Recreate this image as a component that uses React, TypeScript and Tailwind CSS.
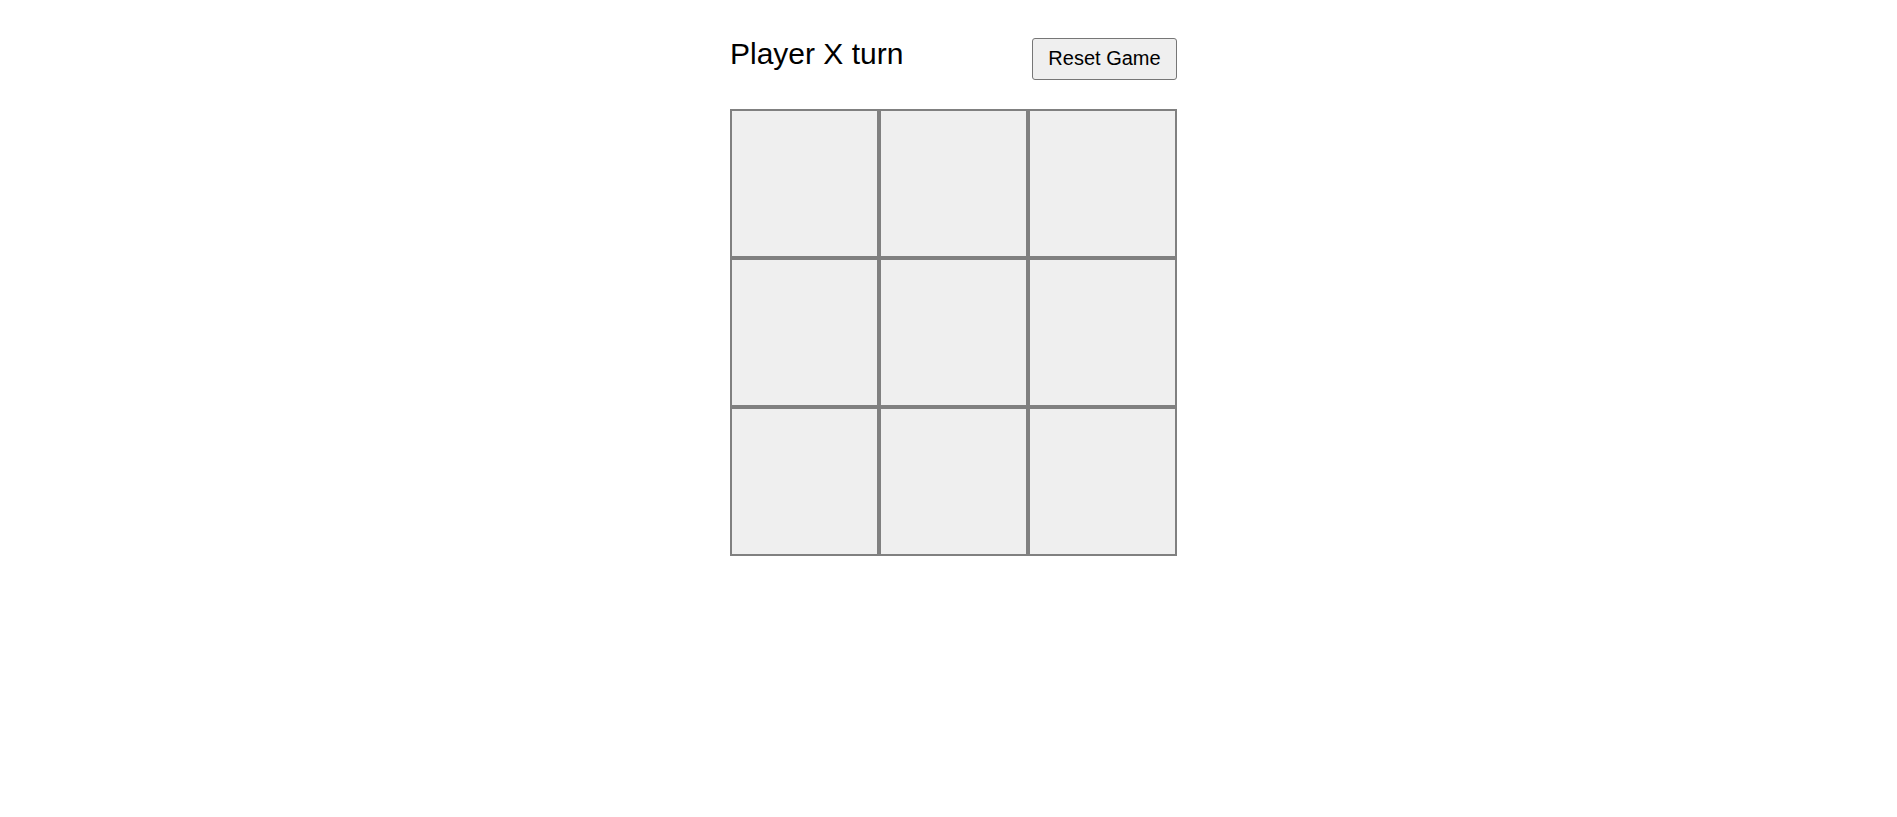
import React from "react";

export default function App() {
  const cells = Array.from({ length: 9 });
  return (
    <div className="min-h-screen bg-white flex justify-center pl-[10px] pt-[38px]" style={{ fontFamily: '"Liberation Sans", Arial, sans-serif' }}>
      <div className="w-[447px] flex flex-col">
        <div className="flex items-start justify-between h-[42px]">
          <div className="text-[30px] leading-[32px] text-black">Player X turn</div>
          <button className="w-[145px] h-[42px] border border-[#767676] rounded-[3px] bg-[#efefef] text-[20px] leading-[24px] pb-[2px] text-black">
            Reset Game
          </button>
        </div>
        <div className="mt-[29px] grid grid-cols-[149px_149px_149px] grid-rows-[149px_149px_149px]">
          {cells.map((_, i) => (
            <button key={i} className="border-2 border-[#808080] bg-[#efefef]" />
          ))}
        </div>
      </div>
    </div>
  );
}
